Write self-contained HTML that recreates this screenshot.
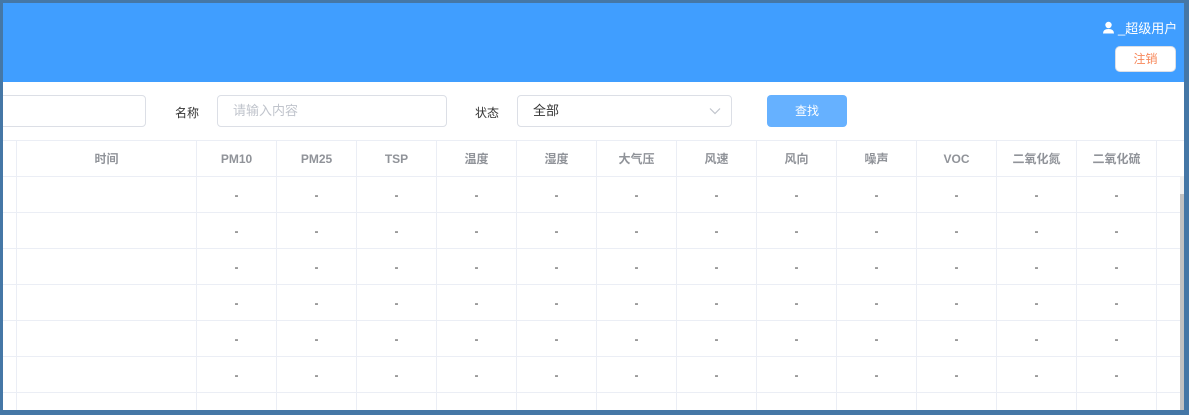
<!DOCTYPE html>
<html><head><meta charset="utf-8"><style>
*{margin:0;padding:0;box-sizing:border-box}
body{width:1189px;height:415px;overflow:hidden;background:#4577a6;font-family:"Liberation Sans","Noto Sans CJK SC",sans-serif;position:relative}
.page{position:absolute;left:3px;top:3px;width:1181px;height:407px;background:#fff;overflow:hidden}
.hdr{position:absolute;left:0;top:0;width:1181px;height:79px;background:#409eff}
.user{position:absolute;left:1099px;top:15px;color:#fff;font-size:13px;display:flex;align-items:center}
.logout{position:absolute;left:1112px;top:43px;width:61px;height:26px;background:#fff;border:1px solid #dcdfe6;border-radius:5px;color:#f7875a;font-size:12px;text-align:center;line-height:24px}
.inp{position:absolute;top:92px;height:32px;border:1px solid #dcdfe6;border-radius:4px;background:#fff;font-size:13px;line-height:30px;padding-left:15px}
.lbl{position:absolute;top:101px;font-size:12px;color:#333}
.btn{position:absolute;left:764px;top:92px;width:80px;height:32px;background:#66b1ff;border-radius:4px;color:#fff;font-size:12px;text-align:center;line-height:32px}
table{position:absolute;left:-187px;top:137px;width:1380px;border-collapse:collapse;table-layout:fixed}
td,th{border:1px solid #ebeef5;height:36px;text-align:center;font-size:12px;padding:0}
th{color:#909399;font-weight:bold}
td{color:#333}
.sb{position:absolute;left:1177px;top:173px;width:4px;height:234px;background:#f0f0f0}
.sb i{position:absolute;left:0;top:18px;width:4px;height:216px;background:#c1c1c1}
</style></head><body>
<div class="page">
<div class="hdr">
<div class="user"><svg width="13" height="13" viewBox="0 0 13 13"><circle cx="6.5" cy="4" r="3.2" fill="#fff"/><path d="M1 12.5 Q1 8 6.5 8 Q12 8 12 12.5Z" fill="#fff"/></svg><span style="margin-left:3px">_超级用户</span></div>
<div class="logout">注销</div>
</div>
<div class="inp" style="left:-20px;width:163px"></div>
<div class="lbl" style="left:172px">名称</div>
<div class="inp" style="left:214px;width:230px;color:#c0c4cc">请输入内容</div>
<div class="lbl" style="left:472px">状态</div>
<div class="inp" style="left:514px;width:215px;color:#333">全部<svg style="position:absolute;right:10px;top:11px" width="12" height="8" viewBox="0 0 12 8"><path d="M1 1.5 L6 6.5 L11 1.5" stroke="#c0c4cc" fill="none" stroke-width="1.2"/></svg></div>
<div class="btn">查找</div>
<table>
<colgroup><col style="width:200px"><col style="width:180px"><col style="width:80px"><col style="width:80px"><col style="width:80px"><col style="width:80px"><col style="width:80px"><col style="width:80px"><col style="width:80px"><col style="width:80px"><col style="width:80px"><col style="width:80px"><col style="width:80px"><col style="width:80px"><col style="width:40px"></colgroup>
<tr><th></th><th>时间</th><th>PM10</th><th>PM25</th><th>TSP</th><th>温度</th><th>湿度</th><th>大气压</th><th>风速</th><th>风向</th><th>噪声</th><th>VOC</th><th>二氧化氮</th><th>二氧化硫</th><th></th></tr>
<tr><td></td><td></td><td>-</td><td>-</td><td>-</td><td>-</td><td>-</td><td>-</td><td>-</td><td>-</td><td>-</td><td>-</td><td>-</td><td>-</td><td></td></tr>
<tr><td></td><td></td><td>-</td><td>-</td><td>-</td><td>-</td><td>-</td><td>-</td><td>-</td><td>-</td><td>-</td><td>-</td><td>-</td><td>-</td><td></td></tr>
<tr><td></td><td></td><td>-</td><td>-</td><td>-</td><td>-</td><td>-</td><td>-</td><td>-</td><td>-</td><td>-</td><td>-</td><td>-</td><td>-</td><td></td></tr>
<tr><td></td><td></td><td>-</td><td>-</td><td>-</td><td>-</td><td>-</td><td>-</td><td>-</td><td>-</td><td>-</td><td>-</td><td>-</td><td>-</td><td></td></tr>
<tr><td></td><td></td><td>-</td><td>-</td><td>-</td><td>-</td><td>-</td><td>-</td><td>-</td><td>-</td><td>-</td><td>-</td><td>-</td><td>-</td><td></td></tr>
<tr><td></td><td></td><td>-</td><td>-</td><td>-</td><td>-</td><td>-</td><td>-</td><td>-</td><td>-</td><td>-</td><td>-</td><td>-</td><td>-</td><td></td></tr>
<tr><td></td><td></td><td>-</td><td>-</td><td>-</td><td>-</td><td>-</td><td>-</td><td>-</td><td>-</td><td>-</td><td>-</td><td>-</td><td>-</td><td></td></tr>
</table>
<div class="sb"><i></i></div>
</div>
</body></html>
